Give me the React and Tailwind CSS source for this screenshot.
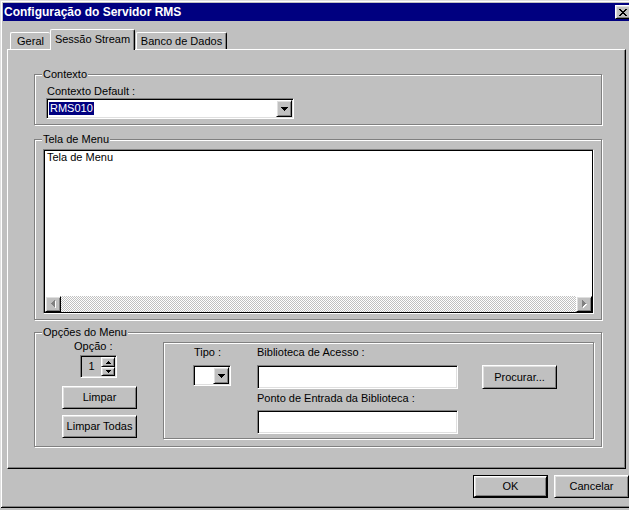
import React from 'react';

// Win95-style bevels
const raised =
  'border border-t-white border-l-white border-b-black border-r-black shadow-[inset_1px_1px_0_#dfdfdf,inset_-1px_-1px_0_#808080]';
const sunken =
  'border border-t-[#808080] border-l-[#808080] border-b-white border-r-white shadow-[inset_1px_1px_0_#000,inset_-1px_-1px_0_#dfdfdf]';
const etched = 'border border-[#808080] shadow-[inset_1px_1px_0_#fff,1px_1px_0_#fff]';

const DownArrow = () => (
  <svg width="7" height="4" viewBox="0 0 7 4" shapeRendering="crispEdges">
    <path d="M0 0h7v1H0zM1 1h5v1H1zM2 2h3v1H2zM3 3h1v1H3z" fill="#000" />
  </svg>
);

const SpinUp = () => (
  <svg width="5" height="3" viewBox="0 0 5 3" shapeRendering="crispEdges">
    <path d="M2 0h1v1H2zM1 1h3v1H1zM0 2h5v1H0z" fill="#000" />
  </svg>
);

const SpinDown = () => (
  <svg width="5" height="3" viewBox="0 0 5 3" shapeRendering="crispEdges">
    <path d="M0 0h5v1H0zM1 1h3v1H1zM2 2h1v1H2z" fill="#000" />
  </svg>
);

// disabled scroll arrows: grey glyph with white emboss
const LeftArrow = () => (
  <svg width="5" height="8" viewBox="0 0 5 8" shapeRendering="crispEdges">
    <path d="M4 1h1v7H4zM3 2h1v5H3zM2 3h1v3H2zM1 4h1v1H1z" fill="#fff" />
    <path d="M3 0h1v7H3zM2 1h1v5H2zM1 2h1v3H1zM0 3h1v1H0z" fill="#808080" />
  </svg>
);

const RightArrow = () => (
  <svg width="5" height="8" viewBox="0 0 5 8" shapeRendering="crispEdges">
    <path d="M1 1h1v7H1zM2 2h1v5H2zM3 3h1v3H3zM4 4h1v1H4z" fill="#fff" />
    <path d="M0 0h1v7H0zM1 1h1v5H1zM2 2h1v3H2zM3 3h1v1H3z" fill="#808080" />
  </svg>
);

const CloseGlyph = () => (
  <svg width="8" height="7" viewBox="0 0 8 7" shapeRendering="crispEdges">
    <path d="M0 0h2l2 2.5L6 0h2L5 3.5 8 7H6L4 4.5 2 7H0l3-3.5z" fill="#000" />
  </svg>
);

function Button({ children, className = '' }) {
  return (
    <div className={`flex items-center justify-center bg-[#c0c0c0] ${raised} ${className}`}>
      {children}
    </div>
  );
}

function Combo({ className = '', children }) {
  return (
    <div className={`flex bg-white p-[1px] ${sunken} ${className}`}>
      <div className="flex-1 flex items-center">{children}</div>
      <Button className="w-[16px] h-[17px]">
        <DownArrow />
      </Button>
    </div>
  );
}

function Group({ label, className = '', children }) {
  return (
    <div className={`relative ${etched} ${className}`}>
      <span className="absolute -top-[7px] left-[7px] bg-[#c0c0c0] px-[1px]">{label}</span>
      {children}
    </div>
  );
}

function Tab({ label, active, last, className = '' }) {
  const right = last ? '' : 'border-r border-r-black shadow-[inset_-1px_0_0_#808080]';
  return (
    <div
      className={`flex items-center justify-center rounded-t-[2px] border-l border-t border-white bg-[#c0c0c0] ${right} ${
        active ? 'relative z-10 -mb-px h-[21px] pb-[2px]' : 'h-[17px]'
      } ${className}`}
    >
      {label}
    </div>
  );
}

const App = () => {
  return (
    <div className="w-[629px] h-[510px] overflow-hidden bg-[#c0c0c0] font-['Liberation_Sans',Arial,sans-serif] text-[11px] leading-[13px] text-black">
      <div className="w-[636px] h-[508px] p-[3px] flex flex-col bg-[#c0c0c0] shadow-[inset_1px_1px_0_#dfdfdf,inset_-1px_-1px_0_#000,inset_2px_2px_0_#fff,inset_-2px_-2px_0_#808080]">
        {/* Title bar */}
        <div className="h-[18px] bg-[#000080] flex items-center justify-between pl-[1px]">
          <span className="text-white font-bold text-[12px] leading-[14px]">Configuração do Servidor RMS</span>
          <Button className="w-[16px] h-[14px] mr-[2px]">
            <CloseGlyph />
          </Button>
        </div>

        {/* Tabs */}
        <div className="mt-[8px] ml-[7px] flex items-end h-[20px]">
          <Tab label="Geral" last className="w-[40px] border-r-0" />
          <Tab label="Sessão Stream" active className="w-[85px]" />
          <Tab label="Banco de Dados" className="w-[91px] ml-[1px]" />
        </div>

        {/* Tab panel */}
        <div className="ml-[4px] w-[619px] h-[420px] border border-t-white border-l-white border-r-black border-b-black shadow-[inset_-1px_-1px_0_#808080] pl-[26px] pt-[24px]">
          <Group label="Contexto" className="w-[568px] h-[51px] pl-[12px] pt-[10px]">
            <div>Contexto Default :</div>
            <Combo className="-ml-[1px] w-[248px] h-[21px]">
              <span className="ml-[1px] h-[13px] bg-[#000080] text-white px-[1px]">RMS010</span>
            </Combo>
          </Group>

          <Group label="Tela de Menu" className="mt-[14px] w-[568px] h-[181px] pl-[8px] pt-[9px]">
            <div className="w-[551px] h-[165px] flex flex-col bg-white p-[1px] border border-t-[#808080] border-l-[#808080] border-b-white border-r-white shadow-[inset_0_0_0_1px_#000]">
              <div className="flex-1 pl-[2px]">Tela de Menu</div>
              <div className="h-[16px] flex">
                <Button className="w-[16px] h-[16px]">
                  <LeftArrow />
                </Button>
                <div className="flex-1 bg-[image:repeating-conic-gradient(#c0c0c0_0%_25%,#ffffff_0%_50%)] bg-[length:2px_2px]" />
                <Button className="w-[16px] h-[16px]">
                  <RightArrow />
                </Button>
              </div>
            </div>
          </Group>

          <Group label="Opções do Menu" className="mt-[12px] w-[568px] h-[115px] flex items-start">
            <div className="ml-[27px] pt-[7px] w-[75px] flex flex-col">
              <div className="ml-[12px]">Opção :</div>
              <div className={`ml-[18px] mt-[2px] w-[37px] h-[23px] p-[1px] flex ${sunken}`}>
                <div className="flex-1 flex items-center justify-center">1</div>
                <div className="w-[14px] flex flex-col">
                  <Button className="h-[10px]">
                    <SpinUp />
                  </Button>
                  <Button className="h-[9px]">
                    <SpinDown />
                  </Button>
                </div>
              </div>
              <Button className="mt-[8px] w-[75px] h-[23px]">Limpar</Button>
              <Button className="mt-[6px] w-[75px] h-[23px]">Limpar Todas</Button>
            </div>

            <div className={`ml-[26px] mt-[9px] w-[431px] h-[97px] flex items-start ${etched}`}>
              <div className="ml-[29px] pt-[3px] flex flex-col">
                <div className="ml-[1px]">Tipo :</div>
                <Combo className="mt-[6px] w-[38px] h-[21px]" />
              </div>
              <div className="ml-[26px] pt-[3px] flex flex-col">
                <div>Biblioteca de Acesso :</div>
                <div className={`mt-[6px] w-[201px] h-[24px] bg-white ${sunken}`} />
                <div className="mt-[3px]">Ponto de Entrada da Biblioteca :</div>
                <div className={`mt-[5px] w-[201px] h-[24px] bg-white ${sunken}`} />
              </div>
              <Button className="ml-[24px] mt-[22px] w-[75px] h-[24px]">Procurar...</Button>
            </div>
          </Group>
        </div>

        {/* Dialog buttons */}
        <div className="mt-[6px] flex justify-end gap-[6px] pr-[4px]">
          <div className="w-[75px] h-[23px] border border-black flex">
            <Button className="flex-1">OK</Button>
          </div>
          <Button className="w-[75px] h-[23px]">Cancelar</Button>
        </div>
      </div>
    </div>
  );
};

export default App;
